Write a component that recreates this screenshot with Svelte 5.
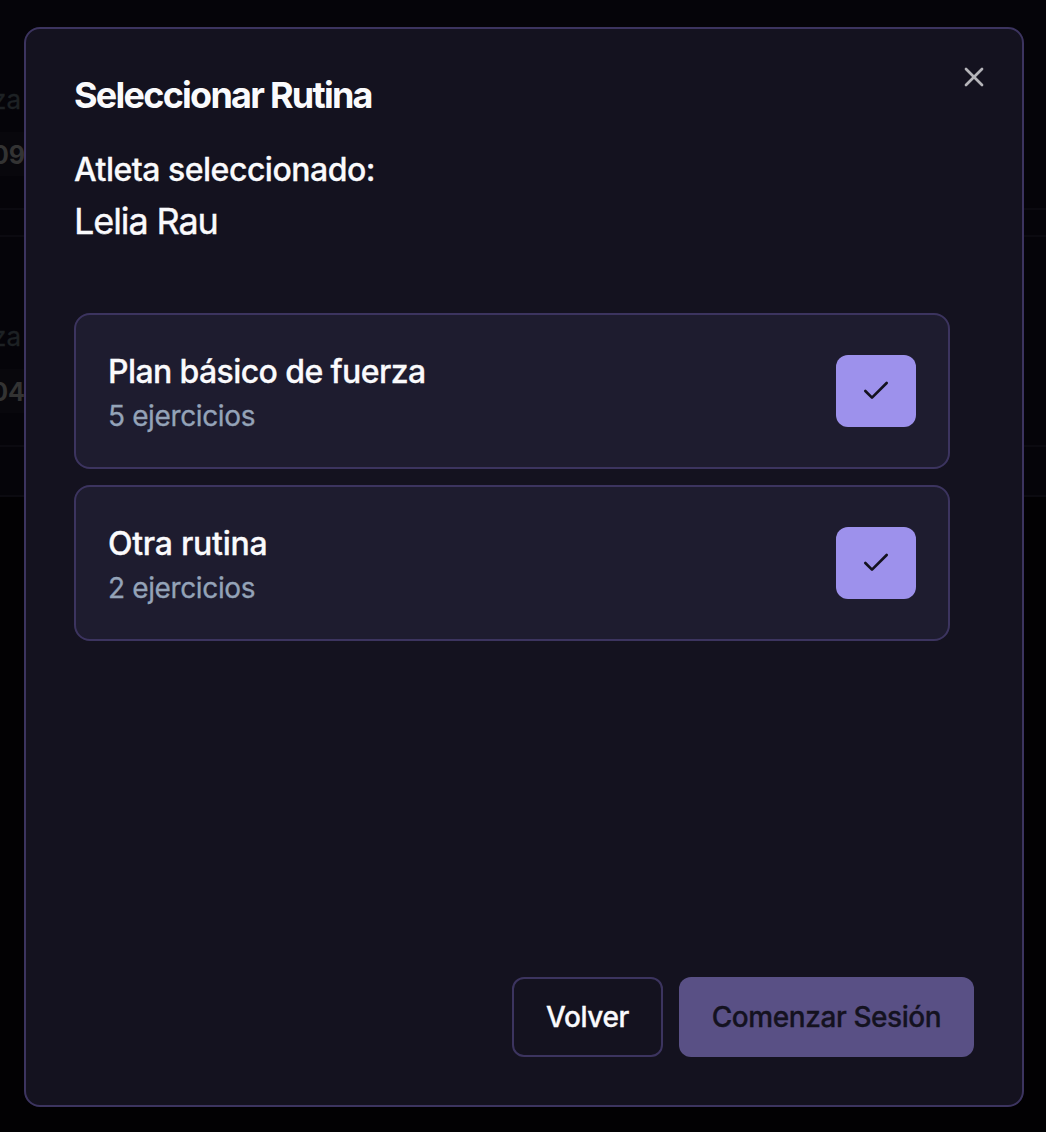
<script>
  const athlete = 'Lelia Rau';
  const routines = [
    { name: 'Plan básico de fuerza', count: 5 },
    { name: 'Otra rutina', count: 2 }
  ];
  const sessions = [
    { label: 'za', value: '09' },
    { label: 'za', value: '04' }
  ];
</script>

<div class="screen">
  <div class="backdrop" aria-hidden="true">
    {#each sessions as s, i}
      <section class="session">
        <span class="label">{s.label}</span>
        <span class="value">{s.value}</span>
      </section>
      <div class="divider" class:tall={i === 1}></div>
    {/each}
  </div>

  <div class="dialog" role="dialog" aria-labelledby="title">
    <button class="close" aria-label="Cerrar">
      <svg viewBox="0 0 24 24"><path d="M18 6 6 18" /><path d="m6 6 12 12" /></svg>
    </button>
    <h2 id="title">Seleccionar Rutina</h2>
    <div class="athlete">
      <h3>Atleta seleccionado:</h3>
      <p>{athlete}</p>
    </div>
    <div class="list">
      {#each routines as r}
        <article>
          <div>
            <h4>{r.name}</h4>
            <p>{r.count} ejercicios</p>
          </div>
          <button class="check" aria-label="Seleccionar">
            <svg viewBox="0 0 24 24"><path d="M20 6 9 17l-5-5" /></svg>
          </button>
        </article>
      {/each}
    </div>
    <footer>
      <button class="outline">Volver</button>
      <button class="primary" disabled>Comenzar Sesión</button>
    </footer>
  </div>
</div>

<style>
  :global(body) { background: #020103; }
  * { box-sizing: border-box; margin: 0; }
  .screen {
    position: relative;
    height: 1132px;
    padding: 27px 22px 25px 24px;
    overflow: hidden;
    font-family: Inter, sans-serif;
    color: #fafafc;
  }
  .backdrop { position: absolute; inset: 0; }
  .session {
    height: 210px;
    padding-top: 84px;
    border-bottom: 2px solid #0b0a10;
    background: #050409;
  }
  .label {
    display: block;
    width: 21px;
    height: 48px;
    line-height: 32px;
    font-size: 26px;
    direction: rtl;
    color: #1d2124;
    -webkit-text-stroke: 0.3px currentColor;
  }
  .value {
    display: flex;
    justify-content: flex-end;
    width: 25px;
    height: 44px;
    padding-top: 1px;
    line-height: 44px;
    font-size: 25px;
    font-weight: 700;
    color: #333;
    background: #08070c;
  }
  .divider { height: 27px; background: #050409; border-bottom: 2px solid #0b0a10; }
  .divider.tall { height: 50px; }
  .dialog {
    position: relative;
    display: flex;
    flex-direction: column;
    height: 1080px;
    padding: 48px;
    border: 2px solid #3c345f;
    border-radius: 16px;
    background: #14121f;
  }
  button { font: inherit; border: 0; padding: 0; color: inherit; }
  svg {
    display: block;
    width: 32px;
    height: 32px;
    fill: none;
    stroke: currentColor;
    stroke-width: 2;
    stroke-linecap: round;
    stroke-linejoin: round;
  }
  .close {
    position: absolute;
    top: 32px;
    right: 32px;
    color: #b5b4b9;
    background: none;
  }
  h2 { font-size: 36px; line-height: 36px; font-weight: 650; letter-spacing: -1.75px; }
  .athlete { margin: 32px 0 64px; }
  h3, h4 {
    padding-top: 2px;
    font-size: 32px;
    line-height: 46px;
    font-weight: 550;
    letter-spacing: -0.6px;
    -webkit-text-stroke: 0.3px currentColor;
  }
  h3 { letter-spacing: -0.5px; }
  article:last-child h4 { letter-spacing: -0.28px; }
  .athlete p { font-size: 36px; line-height: 56px; letter-spacing: -1.1px; -webkit-text-stroke: 0.4px currentColor; }
  .list { display: flex; flex-direction: column; gap: 16px; padding-right: 24px; }
  article {
    display: flex;
    align-items: center;
    justify-content: space-between;
    padding: 32px;
    border: 2px solid #3c345f;
    border-radius: 16px;
    background: #1e1c2f;
  }
  article p {
    padding-top: 2px;
    font-size: 28px;
    line-height: 38px;
    letter-spacing: -0.37px;
    color: #94a3b8;
    -webkit-text-stroke: 0.3px currentColor;
  }
  .check {
    display: grid;
    place-items: center;
    width: 80px;
    height: 72px;
    border-radius: 12px;
    color: #14121f;
    background: #9d91ec;
  }
  footer { display: flex; justify-content: flex-end; gap: 16px; margin-top: auto; }
  footer button {
    height: 80px;
    border-radius: 12px;
    font-size: 28px;
    font-weight: 550;
    letter-spacing: -0.42px;
    -webkit-text-stroke: 0.3px currentColor;
  }
  .outline { width: 151px; border: 2px solid #3c345f; background: #14121f; }
  .primary { width: 295px; color: #14121f; background: #595085; }
</style>
